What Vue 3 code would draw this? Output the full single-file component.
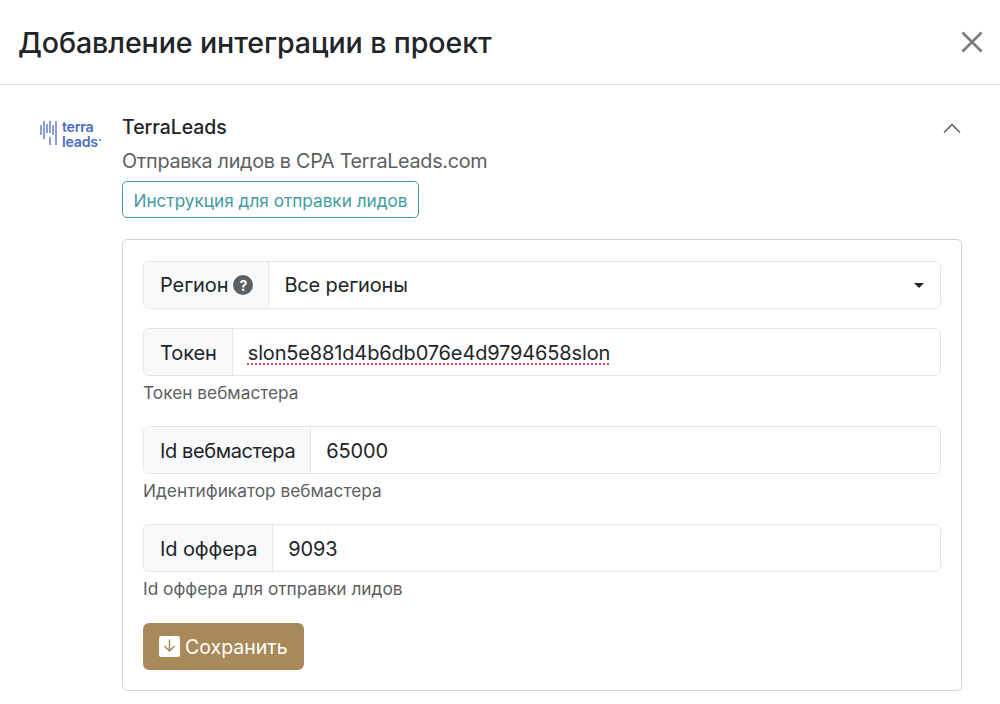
<script setup>
const fields = [
  { label: 'Токен', value: 'slon5e881d4b6db076e4d9794658slon', hint: 'Токен вебмастера', spell: true },
  { label: 'Id вебмастера', value: '65000', hint: 'Идентификатор вебмастера', tight: true },
  { label: 'Id оффера', value: '9093', hint: 'Id оффера для отправки лидов' }
]
</script>

<template>
  <div class="modal">
    <header class="head">
      <h1>Добавление интеграции в проект</h1>
      <svg class="close" width="22" height="22" viewBox="0 0 22 22" aria-label="Закрыть">
        <path d="M1.500 1.500 L20.500 20.500 M20.500 1.500 L1.500 20.500" stroke="#7b7b7b" stroke-width="2.600" fill="none" />
      </svg>
    </header>
    <main class="body">
      <div class="logo">
        <svg width="17" height="25" viewBox="0 0 17 25">
          <g stroke="#4a6cc4" stroke-width="1.300" fill="none">
            <path d="M1 5 V15" />
            <path d="M4 1 V19" />
            <path d="M7 4 V13" />
            <path d="M10 1 V13 M10 17 V25" />
            <path d="M13 5 V15" />
            <path d="M16 1 V25" />
          </g>
        </svg>
        <div class="logo-text">terra<br />leads<i class="dot"></i></div>
      </div>
      <div class="content">
        <div class="title-row">
          <div class="name">TerraLeads</div>
          <svg class="chev" width="18" height="10" viewBox="0 0 18 10">
            <path d="M1 9.500 L9 1.500 L17 9.500" stroke="#555" stroke-width="1.300" fill="none" />
          </svg>
        </div>
        <div class="desc">Отправка лидов в CPA TerraLeads.com</div>
        <button class="guide">Инструкция для отправки лидов</button>
        <section class="card">
          <div class="group region">
            <div class="addon">Регион <span class="q">?</span></div>
            <div class="select">
              <span>Все регионы</span>
              <i class="caret"></i>
            </div>
          </div>
          <div v-for="f in fields" :key="f.label" class="field">
            <div class="group">
              <div class="addon" :class="{ tight: f.tight }">{{ f.label }}</div>
              <div class="input"><span :class="{ spell: f.spell }">{{ f.value }}</span></div>
            </div>
            <div class="hint">{{ f.hint }}</div>
          </div>
          <button class="save">
            <svg width="21" height="21" viewBox="0 0 21 21">
              <rect width="21" height="21" rx="2.500" fill="#fff" />
              <path d="M10.500 3.500 V15 M5.500 10 L10.500 15 L15.500 10" stroke="#a88a5a" stroke-width="1.500" fill="none" />
            </svg>
            Сохранить
          </button>
        </section>
      </div>
    </main>
  </div>
</template>

<style>
html, body { margin: 0; background: #fff; }
</style>

<style scoped>
.modal {
  width: 1000px;
  height: 704px;
  overflow: hidden;
  background: #fff;
  color: #212529;
  font-family: Inter, "Liberation Sans", sans-serif;
}
.head {
  height: 85px;
  box-sizing: border-box;
  border-bottom: 1px solid #dee2e6;
  display: flex;
  align-items: center;
  justify-content: space-between;
  padding: 0 17px 0 18px;
}
h1 {
  margin: 0;
  font-size: 28.600px;
  font-weight: 500;
  letter-spacing: -0.100px;
}
.body {
  display: flex;
  padding: 30px 38px 0 40px;
}
.logo {
  width: 82px;
  flex: none;
  display: flex;
  gap: 5px;
  align-items: flex-start;
  padding-top: 5px;
  box-sizing: border-box;
}
.logo-text {
  font-size: 14.200px;
  line-height: 14.500px;
  font-weight: 600;
  color: #4a6cc4;
  letter-spacing: -0.250px;
}
.dot {
  display: inline-block;
  width: 2px;
  height: 2px;
  margin-left: 1px;
  border-radius: 50%;
  background: #4a6cc4;
  vertical-align: 6px;
}
.content { flex: 1; min-width: 0; }
.title-row {
  display: flex;
  justify-content: space-between;
  align-items: center;
  height: 24px;
}
.name {
  font-size: 19.400px;
  font-weight: 500;
}
.chev { margin-right: 1px; margin-top: 1px; }
.desc {
  margin-top: 10px;
  font-size: 19.800px;
  line-height: 24px;
  color: #5c5f62;
  letter-spacing: -0.300px;
}
.guide {
  display: block;
  margin-top: 8px;
  width: 297px;
  height: 37px;
  padding: 2px 0 0;
  background: #fff;
  border: 1px solid #3f9c9f;
  border-radius: 5px;
  color: #3f9c9f;
  font: inherit;
  font-size: 17.200px;
}
.card {
  margin-top: 21px;
  height: 452px;
  box-sizing: border-box;
  border: 1px solid #ced4da;
  border-radius: 5px;
  padding: 21px 20px 0;
}
.group {
  display: flex;
  height: 48px;
  box-sizing: border-box;
  border: 1px solid #e4e7ea;
  border-radius: 6px;
  font-size: 20px;
  overflow: hidden;
}
.addon {
  display: flex;
  align-items: center;
  gap: 5px;
  padding: 0 15px 0 16px;
  background: #f8f9fa;
  border-right: 1px solid #e4e7ea;
  letter-spacing: -0.100px;
}
.addon.tight { letter-spacing: -0.400px; }
.q {
  width: 20px;
  height: 20px;
  border-radius: 50%;
  background: #5c5f62;
  color: #fff;
  font-size: 14px;
  font-weight: 700;
  display: flex;
  align-items: center;
  justify-content: center;
}
.select, .input {
  flex: 1;
  display: flex;
  align-items: center;
  justify-content: space-between;
  padding: 0 16px 0 15px;
  letter-spacing: -0.150px;
}
.field .addon, .field .input { padding-top: 2px; }
.caret {
  width: 0;
  height: 0;
  border: 5px solid transparent;
  border-top: 5px solid #212529;
  border-bottom: 0;
}
.spell {
  text-decoration: underline dotted #e0504f 2px;
  text-underline-offset: 3px;
}
.field { margin-top: 19px; }
.field + .field { margin-top: 21px; }
.hint {
  margin-top: 5px;
  height: 24px;
  line-height: 24px;
  font-size: 17.300px;
  color: #5c5f62;
}
.save {
  display: flex;
  align-items: center;
  gap: 5px;
  margin-top: 22px;
  width: 161px;
  height: 47px;
  padding: 0 0 0 16px;
  box-sizing: border-box;
  background: #a88a5a;
  border: 0;
  border-radius: 6px;
  color: #fff;
  font: inherit;
  font-size: 19.500px;
}
</style>
